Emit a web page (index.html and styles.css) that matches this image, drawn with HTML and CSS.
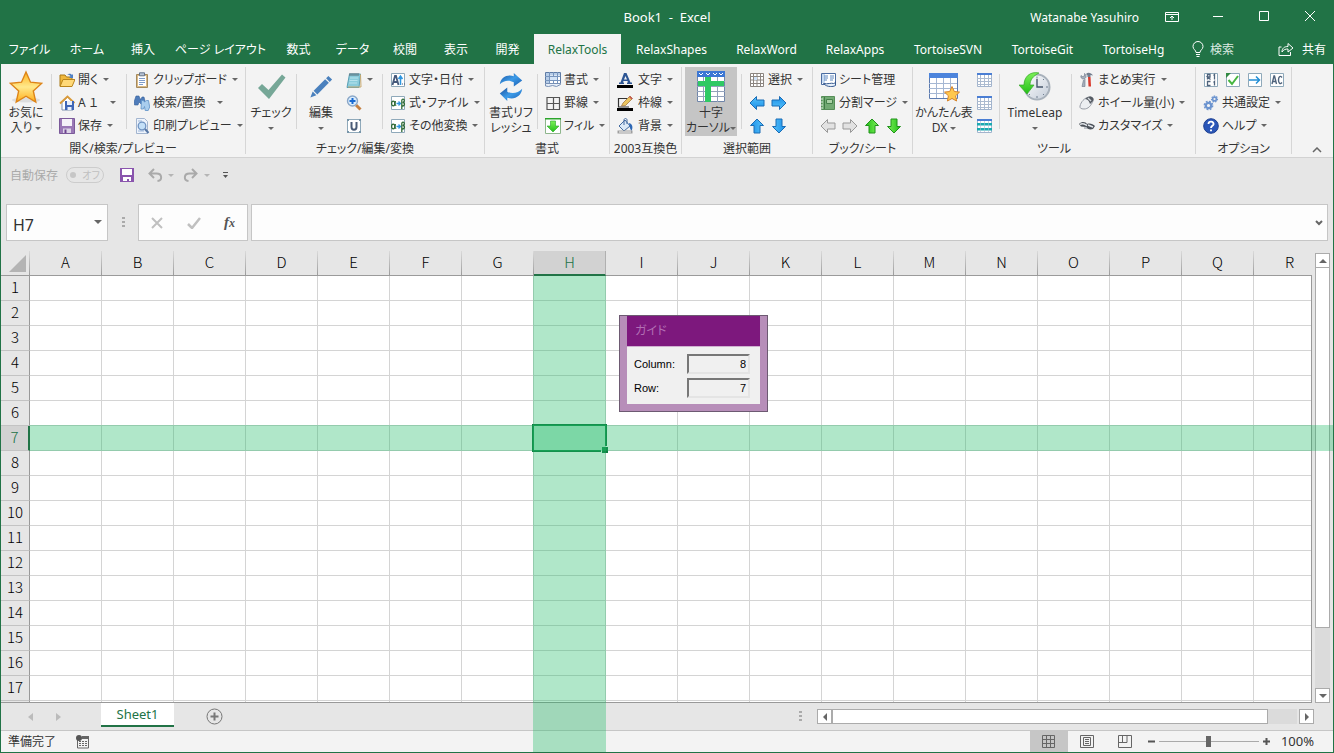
FILE: index.html
```html
<!DOCTYPE html>
<html lang="ja">
<head>
<meta charset="utf-8">
<title>Book1 - Excel</title>
<link rel="stylesheet" href="styles.css">
</head>
<body>
<svg class="sprite" aria-hidden="true">
  <defs>
    <linearGradient id="gold" x1="0" y1="0" x2="0" y2="1"><stop offset="0" stop-color="#ffb21c"/><stop offset=".5" stop-color="#ffe98c"/><stop offset="1" stop-color="#ffae1a"/></linearGradient>
    <linearGradient id="blue" x1="0" y1="0" x2="1" y2="1"><stop offset="0" stop-color="#1c4f9c"/><stop offset=".5" stop-color="#3c9be8"/><stop offset="1" stop-color="#1a5cb0"/></linearGradient>
    <linearGradient id="sky" x1="0" y1="0" x2="0" y2="1"><stop offset="0" stop-color="#55c2fa"/><stop offset="1" stop-color="#1c8fe8"/></linearGradient>
    <linearGradient id="lime" x1="0" y1="0" x2="0" y2="1"><stop offset="0" stop-color="#7df05a"/><stop offset="1" stop-color="#22bf16"/></linearGradient>
    <linearGradient id="silver" x1="0" y1="0" x2="1" y2="1"><stop offset="0" stop-color="#ffffff"/><stop offset="1" stop-color="#c3ccd8"/></linearGradient>
    <path id="arrow-shape" d="M1 8 7.500 1.500V5H15v6H7.500v3.500z"/>
  </defs>
  <symbol id="star" viewBox="0 0 34 34"><ellipse cx="17" cy="30" rx="14" ry="2.500" fill="#ddd"/><path d="M17 2l4.500 10.200 11 1.200-8.200 7.500L26.800 32 17 26.200 7.200 32l2.500-11.100L1.500 13.400l11-1.200z" fill="url(#gold)" stroke="#dd8418" stroke-width="1.400"/></symbol>
  <symbol id="folder" viewBox="0 0 16 16"><path d="M1 14V3h5l1.500 2H13v3" fill="#f0b83c" stroke="#a97816"/><path d="M1 14.500 4 7.500h12l-3 7z" fill="#ffd978" stroke="#b9851c"/><path d="M8 3c2-2 4-1.500 5 0l1-1v4h-4l1.500-1.500C11 3 9.500 2.500 8 3z" fill="#4d7fc4"/></symbol>
  <symbol id="home" viewBox="0 0 16 16"><path d="M3 7.500V15h11V7.500L8.500 2z" fill="#fff" stroke="#7d8fae"/><path d="M1 8.500 8.500 1.500 15.500 8" fill="none" stroke="#d99a3a" stroke-width="1.800"/><path d="M6 6h9v9H6z" fill="#3f66b6"/><path d="M8 6h5v4H8zM8.500 12h4v3h-4z" fill="#e8effa"/></symbol>
  <symbol id="floppy" viewBox="0 0 16 16"><path d="M.5.5h15v15H.5z" fill="#9a78b6" stroke="#7b5a9a"/><path d="M3 1h10v7H3z" fill="#f5f2f8"/><path d="M4 10.500h8V15H4z" fill="#dcd3e6"/><path d="M5.500 11.500h2V15h-2z" fill="#6d4291"/></symbol>
  <symbol id="clip" viewBox="0 0 16 16"><path d="M2.500 2.500h11v13h-11z" fill="#d9b987" stroke="#a58a5c"/><path d="M4 4h8v10H4z" fill="#fff"/><path d="M5 6.500h6M5 8.500h6M5 10.500h6M5 12.500h4" stroke="#7f9cc9"/><path d="M5.500.8h5v3h-5z" fill="#b8c4d4" stroke="#66758c"/></symbol>
  <symbol id="binoc" viewBox="0 0 16 16"><path d="M2 1h3l1 3h1l1-2h2l1 4-1 3H7L5 7 4 10H.5L0 7z" fill="#4f7cba" stroke="#35619c" stroke-width=".6"/><path d="M7.500 5.500h2l1 1.500 2-1.500h2l1.200 6.500-1.500 3.500h-3l-.7-4-1 2.500H7z" fill="#a9cdee" stroke="#5d91c6" stroke-width=".8"/></symbol>
  <symbol id="preview" viewBox="0 0 16 16"><path d="M2.500.5h8l3 3v12h-11z" fill="#eef4fc" stroke="#a3b5cf"/><path d="M4 3h4M4 13h6" stroke="#9db6d8"/><circle cx="8" cy="8" r="3.800" fill="#c4e0f8" stroke="#6f93c2" stroke-width="1.300"/><path d="M11 11l3.500 4" stroke="#5878a6" stroke-width="2"/></symbol>
  <symbol id="check-big" viewBox="0 0 30 28"><path d="M2 15 6 11l6.500 6L26 1.500l3.500 3L13 26z" fill="#76a797"/></symbol>
  <symbol id="pencil-big" viewBox="0 0 26 26"><path d="M5 17 17.500 4.500l4 4L9 21z" fill="#4a80bd"/><path d="M18.500 3.500 21 1l4 4-2.500 2.500zM4 18l4 4-6.500 2.500z" fill="#4a80bd"/></symbol>
  <symbol id="notebook" viewBox="0 0 16 16"><path d="M3.500 2h11L13 15.500H1z" fill="#8accdb" stroke="#5a9fb4"/><path d="M4 1v3M6 1v3M8 1v3M10 1v3M12 1v3" stroke="#5b6f78"/><path d="M4 6h8M3.500 8.500h8M3 11h8" stroke="#b7e2ec"/><path d="M14.500 2.500 15 15H2" fill="none" stroke="#c9a96e"/></symbol>
  <symbol id="magnify" viewBox="0 0 16 16"><path d="M10 10l4.500 4.500" stroke="#c58142" stroke-width="3"/><circle cx="6.500" cy="6" r="5" fill="#d9ecfd" stroke="#8ba7c7" stroke-width="1.400"/><path d="M6.500 3v6M3.500 6h6" stroke="#1769d2" stroke-width="2"/></symbol>
  <symbol id="ubox" viewBox="0 0 16 16"><path d="M1.500 1.500h13v13h-13z" fill="#fff" stroke="#8fa9ba"/><path d="M1 1h2v2H1zM13 1h2v2h-2zM1 13h2v2H1zM13 13h2v2h-2z" fill="#7795a9"/><path d="M5.500 4v5c0 3.500 5 3.500 5 0V4" fill="none" stroke="#4a5c77" stroke-width="2"/></symbol>
  <symbol id="abox" viewBox="0 0 16 16"><path d="M1.500 1.500h13v13h-13z" fill="#fff" stroke="#8fa9ba"/><path d="M2.500 13 5 4h1l2.500 9M3.500 10h4" fill="none" stroke="#46597b" stroke-width="1.800"/><path d="M10.500 13V5M8.500 7l2-3 2 3" fill="none" stroke="#2d95df" stroke-width="1.500"/><path d="M12 12h1M14 12h1" stroke="#46597b"/></symbol>
  <symbol id="abbox" viewBox="0 0 16 16"><path d="M1.500 1.500h13v13h-13z" fill="#fff" stroke="#8fa9ba"/><ellipse cx="3.200" cy="8.500" rx="1.600" ry="2.300" fill="none" stroke="#2f6a35" stroke-width="1.300"/><path d="m5.500 6-.5 3 1 2" fill="none" stroke="#2f6a35"/><path d="M6.500 8.500h3.500M8.500 6.500l2 2-2 2" stroke="#2d95df" stroke-width="1.300" fill="none"/><path d="M11.800 14V5.500c0-2 2.700-1.500 2.500.3 0 1-.8 1.500-1.500 1.700 2.300.2 2.200 3.600-.5 3.500" fill="none" stroke="#2f6a35" stroke-width="1.300"/></symbol>
  <symbol id="refresh" viewBox="0 0 30 32"><path d="M3 13C4 6 11 2 18 4.500V1l9 8-9 6.500V11c-5-3-11-2-15 2z" fill="url(#blue)"/><path d="M27 18c-1 8-8 12-16 9.500V31l-8-8 8-6.500V21c5 3 12 1.500 16-3z" fill="url(#blue)"/></symbol>
  <symbol id="fmt-grid" viewBox="0 0 16 16"><path d="M.5.5h15v11h-15z" fill="#fff" stroke="#5e7ba5"/><path d="M1 1h14v2.500H1zM1 1h3v11H1z" fill="#b7cde8"/><path d="M0 4.500h15M0 8.500h15M4.500 0v12M8.500 0v12M12.500 0v12" stroke="#7795be"/><path d="M5 5h7v3H5z" fill="#d4e4f7"/><path d="M.500 11.500V14l3 .5 4-1 4 1 4-2v-1z" fill="#e6eef8" stroke="#7890b5"/></symbol>
  <symbol id="borders" viewBox="0 0 16 16"><path d="M2 2.500h12.500v12H2zM8.500 2.500v12M2 8.500h12.500" fill="none" stroke="#555" stroke-width="1.200"/></symbol>
  <symbol id="fill" viewBox="0 0 16 16"><path d="M.5.500h15v15H.5z" fill="#fff" stroke="#8eb68c"/><path d="M0 0h16v1.500H0z" fill="#2ba52b"/><path d="M5.500 3h5v5H14l-6 6-6-6h3.500z" fill="url(#lime)" stroke="#29a428" stroke-width=".6"/></symbol>
  <symbol id="font-a" viewBox="0 0 16 16"><path d="M7 1h2.500l4 9.500H15V12h-5v-1.500h1L10.500 9h-4L6 10.500h1V12H2v-1.500h1.500zM7 7.500h3L8.500 4z" fill="#2d5694" fill-rule="evenodd"/><path d="M0 13h16v3H0z"/></symbol>
  <symbol id="frame-pen" viewBox="0 0 16 16"><path d="M10 3.500H1.500V12H12" fill="none" stroke="#333" stroke-width="1.200"/><path d="M4.500 11 6 8l7-7 2.500 2.500-7 7z" fill="#eac45f" stroke="#996b32" stroke-width=".7"/><path d="m12 2 2.500 2.500 1-1L13 1z" fill="#c75353"/><path d="M0 13h16v3H0z"/></symbol>
  <symbol id="bucket" viewBox="0 0 16 16"><path d="m2 8 6-6 5 6-6 5z" fill="#dce9f7" stroke="#446ba0"/><path d="M7 7V2c0-2 3-2 3 0v4" fill="none" stroke="#446ba0"/><path d="M12 5c4 1 4 5 2.500 8-2-3-2-5-2.500-8z" fill="#2e68b5"/><path d="M.5 12.500h15v3H.5z" fill="#9e9e9e"/><path d="M2 13.500h12v1H2z" fill="#f5f5f5"/></symbol>
  <symbol id="cross" viewBox="0 0 30 32"><path d="M1.500.5h27v30h-27z" fill="#fff" stroke="#7186a9"/><path d="M1 0h28v6H1z" fill="#3c77d4"/><path d="m3 2 2 2 2-2M10 2l2 2 2-2M17 2l2 2 2-2M23 2l2 2 2-2" stroke="#fff" fill="none"/><path d="M7.500 6v25M14.500 6v25M21.500 6v25M1 10.500h28M1 15.500h28M1 20.500h28M1 25.500h28" stroke="#93a2bb"/><path d="M9 6h6v25H9zM2 10h26v5H2z" fill="#2fc964"/></symbol>
  <symbol id="grid-gray" viewBox="0 0 16 16"><path d="M2 2h12v12H2z" fill="#fff"/><path d="M1.500 1.500h13v13h-13zM4.500 1v13M8 1v13M11.500 1v13M1 4.500h13M1 8h13M1 11.500h13" fill="none" stroke="#8b8580"/><path d="M5 5h3v3H5z" fill="#cfe2f8"/></symbol>
  <symbol id="al" viewBox="0 0 16 16"><use href="#arrow-shape" fill="url(#sky)" stroke="#1b6cb5"/></symbol>
  <symbol id="ar" viewBox="0 0 16 16"><use href="#arrow-shape" transform="rotate(180 8 8)" fill="url(#sky)" stroke="#1b6cb5"/></symbol>
  <symbol id="au" viewBox="0 0 16 16"><use href="#arrow-shape" transform="rotate(90 8 8)" fill="url(#sky)" stroke="#1b6cb5"/></symbol>
  <symbol id="ad" viewBox="0 0 16 16"><use href="#arrow-shape" transform="rotate(270 8 8)" fill="url(#sky)" stroke="#1b6cb5"/></symbol>
  <symbol id="gl" viewBox="0 0 16 16"><use href="#arrow-shape" fill="#e2e2e2" stroke="#999"/></symbol>
  <symbol id="gr" viewBox="0 0 16 16"><use href="#arrow-shape" transform="rotate(180 8 8)" fill="#e2e2e2" stroke="#999"/></symbol>
  <symbol id="gu" viewBox="0 0 16 16"><use href="#arrow-shape" transform="rotate(90 8 8)" fill="url(#lime)" stroke="#21931b"/></symbol>
  <symbol id="gd" viewBox="0 0 16 16"><use href="#arrow-shape" transform="rotate(270 8 8)" fill="url(#lime)" stroke="#21931b"/></symbol>
  <symbol id="sheet-doc" viewBox="0 0 16 16"><path d="M1.500 1.500h14v11h-14z" fill="#fff" stroke="#4b6ca0"/><path d="M2 2h3v9H2z" fill="#c6d9f0"/><path d="M4 4h4M4 6h4M4 8h3M10 4h4M10 6h4M10 8h3" stroke="#5e87be"/><path d="M3.500 11.500c4 1 8-1 10 0 2 0 2-2 2-2v4c-2 1-3 1-5 1-3 0-5-1-7-3z" fill="#e8f1fb" stroke="#35588f"/></symbol>
  <symbol id="green-book" viewBox="0 0 16 16"><path d="M1.500 1.500h13v13h-13z" fill="#72aa73" stroke="#568e58"/><path d="M4.500 2v12" stroke="#407b45"/><path d="M6.500 4.500h6v4h-6z" fill="#a9d1a5" stroke="#45804a"/><path d="M1 4h2M1 7h2M1 10h2M1 13h2" stroke="#dceedd"/></symbol>
  <symbol id="table-star" viewBox="0 0 32 32"><path d="M1.500 2.500h28v25h-28z" fill="#fff" stroke="#5c7bb0"/><path d="M1 2h29v5H1z" fill="#4c84dc"/><path d="M8.500 7v20M15.500 7v20M22.500 7v20M1 12.500h28M1 17.500h28M1 22.500h28" stroke="#a5b7d3"/><path d="m24 15.500 2.300 5 5.200.600-3.900 3.700 1 5.200-4.600-2.500-4.600 2.500 1-5.200-3.900-3.700 5.200-.6z" fill="#ffc84d" stroke="#d7842a"/></symbol>
  <symbol id="table-small" viewBox="0 0 16 16"><path d="M1.500 1.500h14v13h-14z" fill="#fff" stroke="#a2b4cd"/><path d="M1 1h15v2H1z" fill="#4a7ed4"/><path d="M4.500 3v11M8.500 3v11M12.500 3v11M1 6.500h14M1 9.500h14M1 12.500h14" stroke="#acbbd0"/></symbol>
  <symbol id="table-band" viewBox="0 0 16 16"><path d="M1.500 1.500h14v13h-14z" fill="#fff" stroke="#a2b4cd"/><path d="M1 1h15v2H1z" fill="#4a7ed4"/><path d="M1 5h15v2.500H1zM1 10h15v2.500H1z" fill="#19aab1"/><path d="M4.500 3v11M8.500 3v11M12.500 3v11" stroke="#acbbd0" stroke-opacity=".6"/></symbol>
  <symbol id="clock" viewBox="0 0 32 32"><circle cx="18" cy="16" r="12.500" fill="url(#silver)" stroke="#a8b1bb" stroke-width="2"/><path d="M18 8v8h6" stroke="#46556a" stroke-width="1.400" fill="none"/><path d="M18 5.500v2M18 25v2M27 16h2M24 9l1-1M24 23l1 1M11 23l-1 1" stroke="#717f91"/><path d="M20 2C11 0 5 6 5 14H0l8 9 7-9h-4c0-5 3-9 9-12z" fill="url(#lime)" stroke="#37a62a" stroke-width=".7"/></symbol>
  <symbol id="tools" viewBox="0 0 16 16"><path d="M4.500 8 3 14.500h3L6 7M2 3.500C1 6 4 8 6 6.500S7 2 5.500 1.500V4l-2 .5z" fill="#a7b0bd" stroke="#6c7787" stroke-width=".6"/><path d="M7 2c2-2 5-1.500 7 1.500L11.500 3v2H8.500V3.500z" fill="#717d8e"/><path d="M9 5h2.500l.5 9.500H9.500z" fill="#d8392c"/></symbol>
  <symbol id="mouse" viewBox="0 0 16 16"><path d="M1 11C2 7 5 3 10 2c3-.5 5 2 4 4-2 5-5 8-9 8-3 0-4.500-1-4-3z" fill="#eceef1" stroke="#989da6"/><path d="M8 2.500C12 0 16 3 14 6l-3 3C10 6 9 4.500 6 4z" fill="#555b63"/><path d="m9 3 3 3" stroke="#d3d7dc" stroke-width="1.400"/></symbol>
  <symbol id="custom" viewBox="0 0 16 16"><path d="M0 6c3-3 7-2 8 0 3-1 6 0 8 2l-2 3c-3 1-6 0-7-2L2 8.500z" fill="#4c525a"/><path d="M1 6.500c3-2 5 0 7 1M9 7l5 2" stroke="#e2e5e9" stroke-width="1.400" fill="none"/><path d="M5 10h3" stroke="#adb2b8" stroke-width="1.500"/></symbol>
  <symbol id="r1c1" viewBox="0 0 16 16"><path d="M1.500 1.500h13v13h-13z" fill="#fff" stroke="#8fa9ba"/><path d="M4.500 7.500V2.500H7V5H4.500L7.500 7.500M10.500 3.500l1-1v5M7.500 9.500h-3v4h3M10.500 10.500l1-1v4" fill="none" stroke="#4f637c" stroke-width="1.300"/></symbol>
  <symbol id="check-box" viewBox="0 0 16 16"><path d="M1.500 1.500h13v13h-13z" fill="#fff" stroke="#8fa9ba"/><path d="M1 1h5L1 6z" fill="#328a43"/><path d="m3.500 8 3.500 4 6-8" fill="none" stroke="#46b63f" stroke-width="2"/></symbol>
  <symbol id="right-box" viewBox="0 0 16 16"><path d="M1.500 1.500h13v13h-13z" fill="#fff" stroke="#8fa9ba"/><path d="M2 8h11M9 4.500 12.500 8 9 11.500" fill="none" stroke="#248fd5" stroke-width="1.500"/></symbol>
  <symbol id="ac-box" viewBox="0 0 16 16"><path d="M1.500 1.500h13v13h-13z" fill="#fff" stroke="#8fa9ba"/><path d="m3 12 2-8h.5l2 8M3.500 9.500h4M13 5.500C11 3 9.500 5 9.500 8s1.500 5 3.500 2.500" fill="none" stroke="#4f637c" stroke-width="1.400"/></symbol>
  <symbol id="gears" viewBox="0 0 16 16"><circle cx="5.500" cy="10.500" r="2.700" fill="none" stroke="#6c94cf" stroke-width="2.200"/><circle cx="5.500" cy="10.500" r="4.200" fill="none" stroke="#6c94cf" stroke-width="1.400" stroke-dasharray="1.800 1.500"/><circle cx="11.500" cy="4" r="1.900" fill="none" stroke="#6c94cf" stroke-width="1.600"/><circle cx="11.500" cy="4" r="3" fill="none" stroke="#6c94cf" stroke-width="1.200" stroke-dasharray="1.400 1.200"/></symbol>
  <symbol id="help" viewBox="0 0 16 16"><circle cx="8" cy="8" r="7.300" fill="#2a56b8" stroke="#1c3f91"/><path d="M5.500 6C5.500 2.500 11 3 10.500 6.200 10.200 7.800 8 7.800 8 10M8 11.500v1.800" fill="none" stroke="#fff" stroke-width="1.900"/></symbol>
</svg>

<div class="app">
  <header class="titlebar">
    <h1 class="doc-title">Book1&nbsp; -&nbsp; Excel</h1>
    <span class="user">Watanabe Yasuhiro</span>
    <button class="win-btn" aria-label="リボンの表示オプション"><svg width="14" height="12" viewBox="0 0 14 12"><path d="M.5 1.500h13v9H.5zM1 3.500h12M7 9V5M5 7l2-2 2 2" fill="none" stroke="#fff"/></svg></button>
    <button class="win-btn" aria-label="最小化"><svg width="12" height="12"><path d="M1 5.500h10" stroke="#fff"/></svg></button>
    <button class="win-btn" aria-label="最大化"><svg width="12" height="12"><path d="M1.500.500h9v9h-9z" fill="none" stroke="#fff"/></svg></button>
    <button class="win-btn" aria-label="閉じる"><svg width="12" height="12"><path d="m1 0 10 10M11 0 1 10" stroke="#fff"/></svg></button>
  </header>

  <nav class="tabs" aria-label="リボン タブ">
    <div class="tab-list">
      <button class="tab">ファイル</button><button class="tab">ホーム</button><button class="tab">挿入</button><button class="tab">ページ レイアウト</button><button class="tab">数式</button><button class="tab">データ</button><button class="tab">校閲</button><button class="tab">表示</button><button class="tab">開発</button><button class="tab active">RelaxTools</button><button class="tab">RelaxShapes</button><button class="tab">RelaxWord</button><button class="tab">RelaxApps</button><button class="tab">TortoiseSVN</button><button class="tab">TortoiseGit</button><button class="tab">TortoiseHg</button>
    </div>
    <button class="tab tell"><svg width="12" height="16" viewBox="0 0 12 16"><path d="M4 11.500C4 9 1 8.500 1 5.500a5 5 0 0 1 10 0c0 3-3 3.500-3 6zM4 13.500h4M4.500 15.500h3" fill="none" stroke="#fff"/></svg>検索</button>
    <button class="tab share"><svg width="16" height="14" viewBox="0 0 16 14"><path d="M3.500 5H1v8.500h11.500V10M4 10c0-4 2.500-5.500 6-5.500V1.500l5 4.500-5 4V7C7.500 7 5.500 7.500 4 10z" fill="none" stroke="#fff"/></svg>共有</button>
  </nav>

  <section class="ribbon" aria-label="RelaxTools">
    <div class="group g-open">
      <div class="group-body">
        <button class="big"><svg width="34" height="34"><use href="#star"/></svg><span>お気に<br>入り<i class="caret"></i></span></button>
        <div class="stack c-file">
          <button class="small"><svg class="ic"><use href="#folder"/></svg>開く<i class="caret"></i></button>
          <button class="small"><svg class="ic"><use href="#home"/></svg><span class="wide">A １</span><i class="caret"></i></button>
          <button class="small"><svg class="ic"><use href="#floppy"/></svg>保存<i class="caret"></i></button>
        </div>
        <div class="stack">
          <button class="small"><svg class="ic"><use href="#clip"/></svg>クリップボード<i class="caret"></i></button>
          <button class="small"><svg class="ic"><use href="#binoc"/></svg><span class="wide">検索/置換</span><i class="caret"></i></button>
          <button class="small"><svg class="ic"><use href="#preview"/></svg>印刷プレビュー<i class="caret"></i></button>
        </div>
      </div>
      <h2>開く/検索/プレビュー</h2>
    </div>
    <div class="group g-check">
      <div class="group-body">
        <button class="big"><svg width="30" height="34"><use href="#check-big"/></svg><span>チェック<br><i class="caret alone"></i></span></button>
        <div class="big-wrap"><button class="big"><svg width="24" height="34"><use href="#pencil-big"/></svg><span>編集<br><i class="caret alone"></i></span></button></div>
        <div class="stack flush">
          <button class="small" aria-label="メモ"><svg class="ic"><use href="#notebook"/></svg><i class="caret"></i></button>
          <button class="small" aria-label="拡大"><svg class="ic"><use href="#magnify"/></svg></button>
          <button class="small" aria-label="下線"><svg class="ic"><use href="#ubox"/></svg></button>
        </div>
        <div class="stack">
          <button class="small"><svg class="ic"><use href="#abox"/></svg>文字・日付<i class="caret"></i></button>
          <button class="small"><svg class="ic"><use href="#abbox"/></svg>式・ファイル<i class="caret"></i></button>
          <button class="small"><svg class="ic"><use href="#abbox"/></svg>その他変換<i class="caret"></i></button>
        </div>
      </div>
      <h2>チェック/編集/変換</h2>
    </div>
    <div class="group g-format">
      <div class="group-body">
        <button class="big"><svg width="28" height="34"><use href="#refresh"/></svg><span>書式リフ<br>レッシュ</span></button>
        <div class="stack">
          <button class="small"><svg class="ic"><use href="#fmt-grid"/></svg>書式<i class="caret"></i></button>
          <button class="small"><svg class="ic"><use href="#borders"/></svg>罫線<i class="caret"></i></button>
          <button class="small"><svg class="ic"><use href="#fill"/></svg>フィル<i class="caret"></i></button>
        </div>
      </div>
      <h2>書式</h2>
    </div>
    <div class="group g-color">
      <div class="group-body">
        <div class="stack flush">
          <button class="small roomy"><svg class="ic"><use href="#font-a"/></svg>文字<i class="caret"></i></button>
          <button class="small roomy"><svg class="ic"><use href="#frame-pen"/></svg>枠線<i class="caret"></i></button>
          <button class="small roomy"><svg class="ic"><use href="#bucket"/></svg>背景<i class="caret"></i></button>
        </div>
      </div>
      <h2>2003互換色</h2>
    </div>
    <div class="group g-select">
      <div class="group-body">
        <button class="big pressed"><svg width="30" height="34"><use href="#cross"/></svg><span>十字<br>カーソル<i class="caret"></i></span></button>
        <div class="stack">
          <button class="small"><svg class="ic"><use href="#grid-gray"/></svg>選択<i class="caret"></i></button>
          <div class="icons"><button aria-label="左"><svg class="ic"><use href="#al"/></svg></button><button aria-label="右"><svg class="ic"><use href="#ar"/></svg></button></div>
          <div class="icons"><button aria-label="上"><svg class="ic"><use href="#au"/></svg></button><button aria-label="下"><svg class="ic"><use href="#ad"/></svg></button></div>
        </div>
      </div>
      <h2>選択範囲</h2>
    </div>
    <div class="group g-book">
      <div class="group-body">
        <div class="stack flush">
          <button class="small"><svg class="ic"><use href="#sheet-doc"/></svg>シート管理</button>
          <button class="small"><svg class="ic"><use href="#green-book"/></svg>分割マージ<i class="caret"></i></button>
          <div class="icons"><button aria-label="前のシート"><svg class="ic"><use href="#gl"/></svg></button><button aria-label="次のシート"><svg class="ic"><use href="#gr"/></svg></button><button aria-label="上へ"><svg class="ic"><use href="#gu"/></svg></button><button aria-label="下へ"><svg class="ic"><use href="#gd"/></svg></button></div>
        </div>
      </div>
      <h2>ブック/シート</h2>
    </div>
    <div class="group g-tool">
      <div class="group-body">
        <button class="big"><svg width="32" height="34"><use href="#table-star"/></svg><span>かんたん表<br>DX<i class="caret"></i></span></button>
        <div class="stack flush narrow">
          <button class="small" aria-label="表1"><svg class="ic"><use href="#table-small"/></svg></button>
          <button class="small" aria-label="表2"><svg class="ic"><use href="#table-small"/></svg></button>
          <button class="small" aria-label="表3"><svg class="ic"><use href="#table-band"/></svg></button>
        </div>
        <div class="big-wrap"><button class="big leap"><svg width="32" height="34"><use href="#clock"/></svg><span>TimeLeap<br><i class="caret alone"></i></span></button></div>
        <div class="stack">
          <button class="small"><svg class="ic"><use href="#tools"/></svg>まとめ実行<i class="caret"></i></button>
          <button class="small"><svg class="ic"><use href="#mouse"/></svg>ホイール量(小)<i class="caret"></i></button>
          <button class="small"><svg class="ic"><use href="#custom"/></svg>カスタマイズ<i class="caret"></i></button>
        </div>
      </div>
      <h2>ツール</h2>
    </div>
    <div class="group g-option">
      <div class="group-body">
        <div class="stack flush">
          <div class="icons"><button aria-label="R1C1"><svg class="ic"><use href="#r1c1"/></svg></button><button aria-label="チェック"><svg class="ic"><use href="#check-box"/></svg></button><button aria-label="移動"><svg class="ic"><use href="#right-box"/></svg></button><button aria-label="AC"><svg class="ic"><use href="#ac-box"/></svg></button></div>
          <button class="small"><svg class="ic"><use href="#gears"/></svg>共通設定<i class="caret"></i></button>
          <button class="small"><svg class="ic"><use href="#help"/></svg>ヘルプ<i class="caret"></i></button>
        </div>
      </div>
      <h2>オプション</h2>
    </div>
    <button class="collapse" aria-label="リボンを折りたたむ"><svg width="10" height="6"><path d="m1 5 4-4 4 4" fill="none" stroke="#666" stroke-width="1.500"/></svg></button>
  </section>

  <div class="quick">
    <label class="autosave">自動保存<button class="toggle" role="switch" aria-checked="false"><i class="knob"></i>オフ</button></label>
    <button aria-label="上書き保存"><svg width="14" height="14"><path d="M0 0h14v14H0z" fill="#8a55ae"/><path d="M2 1h10v6H2zM3 9h8v4H9v-2H7v2H3z" fill="#fff"/></svg></button>
    <button class="undo" aria-label="元に戻す"><svg width="15" height="14"><path d="M6 1 1.500 5.500 6 10M2 5.500h6.500c6 0 6 7 1 7.500" fill="none" stroke="#aaa" stroke-width="2"/></svg><i class="caret faint"></i></button>
    <button class="redo" aria-label="やり直し"><svg width="15" height="14"><path d="m9 1 4.500 4.500L9 10M13 5.500H6.500c-6 0-6 7-1 7.500" fill="none" stroke="#aaa" stroke-width="2"/></svg><i class="caret faint"></i></button>
    <button class="more" aria-label="カスタマイズ"><svg width="7" height="8"><path d="M1 1.500h5" stroke="#555"/><path d="M1 4h5L3.500 7z" fill="#555"/></svg></button>
  </div>

  <div class="formula">
    <div class="name-box"><input aria-label="名前ボックス" value="H7"><i class="caret"></i></div>
    <i class="dots"></i>
    <div class="fx-box">
      <button aria-label="キャンセル"><svg width="12" height="12"><path d="m1 1 10 10M11 1 1 11" stroke="#c0c0c0" stroke-width="2"/></svg></button>
      <button aria-label="入力"><svg width="14" height="12"><path d="m1 7 4 4 8-10" fill="none" stroke="#c0c0c0" stroke-width="2.500"/></svg></button>
      <button class="fx" aria-label="関数の挿入">f<sub>x</sub></button>
    </div>
    <div class="formula-box"><input aria-label="数式バー"><svg width="8" height="6"><path d="m1 1 3 3 3-3" fill="none" stroke="#666" stroke-width="2"/></svg></div>
  </div>

  <main class="work">
    <div class="sheet">
      <table class="cells" id="cells"></table>
    </div>
    <div class="vscroll">
      <button class="sb" aria-label="上へスクロール"><svg width="8" height="4"><path d="M0 4h8L4 0z" fill="#666"/></svg></button>
      <div class="thumb"></div><div class="track"></div>
      <button class="sb" aria-label="下へスクロール"><svg width="8" height="4"><path d="M0 0h8L4 4z" fill="#666"/></svg></button>
    </div>
  </main>

  <div class="sheet-bar">
    <div class="sheet-nav"><button aria-label="前へ"><svg width="5" height="8"><path d="M5 0v8L0 4z" fill="#bbb"/></svg></button><button aria-label="次へ"><svg width="5" height="8"><path d="M0 0v8l5-4z" fill="#bbb"/></svg></button></div>
    <button class="sheet-tab">Sheet1</button>
    <button class="add-sheet" aria-label="新しいシート"><svg width="17" height="17"><circle cx="8.500" cy="8.500" r="7.500" fill="none" stroke="#777"/><path d="M4.500 8.500h8M8.500 4.500v8" stroke="#777" stroke-width="2"/></svg></button>
    <i class="dots"></i>
    <div class="hscroll">
      <button class="sb" aria-label="左へスクロール"><svg width="4" height="8"><path d="M4 0v8L0 4z" fill="#666"/></svg></button>
      <div class="thumb"></div><div class="track"></div>
      <button class="sb" aria-label="右へスクロール"><svg width="4" height="8"><path d="M0 0v8l4-4z" fill="#666"/></svg></button>
    </div>
  </div>

  <footer class="status">
    <span>準備完了</span>
    <button class="macro" aria-label="マクロの記録"><svg width="14" height="14"><path d="M1.500 5v8h11V2H7" fill="none" stroke="#666"/><path d="M6 1h7v3H6z" fill="#666"/><circle cx="3" cy="3" r="3" fill="#555"/><path d="M3 6.500h8M3 8.500h8M3 10.500h8" stroke="#666" stroke-dasharray="2 1"/></svg></button>
    <div class="views">
      <button class="on" aria-label="標準"><svg width="14" height="14"><path d="M.5.500h12v12H.5zM4.500 0v13M8.500 0v13M0 4.500h13M0 8.500h13" fill="none" stroke="#666"/></svg></button>
      <button aria-label="ページ レイアウト"><svg width="14" height="14"><path d="M.5.500h13v12H.5zM3.500 2.500h7v8h-7zM5 4.500h4M5 6.500h4M5 8.500h4" fill="none" stroke="#666"/></svg></button>
      <button aria-label="改ページ プレビュー"><svg width="14" height="14"><path d="M.5.500h13v12H.5zM0 7.500h9V0M4.500 0v7" fill="none" stroke="#666"/></svg></button>
    </div>
    <div class="zoom">
      <button aria-label="縮小"><svg width="7" height="7"><path d="M0 3.500h7" stroke="#555" stroke-width="2"/></svg></button>
      <input type="range" min="0" max="100" value="50" aria-label="ズーム">
      <button aria-label="拡大"><svg width="7" height="7"><path d="M0 3.500h7M3.500 0v7" stroke="#555" stroke-width="2"/></svg></button>
      <span>100%</span>
    </div>
  </footer>

  <div class="guide-col"></div>
  <div class="guide-row"></div>

  <form class="guide">
    <h2>ガイド</h2>
    <div class="guide-body">
      <label for="gcol">Column:</label><input id="gcol" value="8" readonly>
      <label for="grow">Row:</label><input id="grow" value="7" readonly>
    </div>
  </form>
</div>
<script src="sheet.js"></script>
</body>
</html>
```

FILE: styles.css
```css
* { box-sizing: border-box; }
body {
  margin: 0;
  font: 12px/15px "Noto Sans", "Noto Sans CJK JP", sans-serif;
  font-feature-settings: "palt";
  color: #333;
}
h1, h2 { margin: 0; font: inherit; }
button {
  border: 0; padding: 0; background: none; color: inherit; font: inherit;
  font-feature-settings: inherit; display: flex; align-items: center; justify-content: center;
  white-space: nowrap;
}
input { font: inherit; color: inherit; min-width: 0; border: 0; background: none; padding: 0; }
svg { display: block; flex: none; }
.sprite { position: absolute; width: 0; height: 0; }

.app {
  position: relative; display: flex; flex-direction: column; height: 100vh; overflow: hidden;
  border: 1px solid #217346; border-top: 0; background: #e6e6e6;
}

/* title bar */
.titlebar {
  display: flex; align-items: center; justify-content: flex-end; flex: none; height: 34px;
  background: #217346; color: #fff; position: relative;
}
.doc-title { position: absolute; left: 0; right: 0; text-align: center; font-size: 13px; }
.user { font-size: 12px; margin-right: 10px; }
.win-btn { width: 46px; height: 34px; }

/* ribbon tabs */
.tabs { display: flex; flex: none; height: 30px; background: #217346; color: #fff; }
.tab-list { display: grid; grid-template-columns: 57px 58px 54px 101px 55px 53px 52px 50px 53px 87px 101px 89px 88px 98px 91px 91px; }
.tab.active { background: #f3f3f3; color: #217346; }
.tell { gap: 6px; margin-left: 13px; color: #dceae2; }
.share { gap: 8px; margin-left: auto; margin-right: 7px; }

/* ribbon */
.ribbon {
  display: flex; flex: none; height: 94px; padding: 3px 0; background: #f3f3f3;
  border-bottom: 1px solid #d2d2d2;
}
.group { flex: none; display: flex; flex-direction: column; border-right: 1px solid #d6d6d6; }
.group h2 { text-align: center; line-height: 18px; margin-top: 4px; white-space: nowrap; }
.group-body { display: flex; height: 69px; }
.group-body > * { flex: none; }
.g-open { width: 245px; }
.g-check { width: 239px; }
.g-format { width: 125px; }
.g-color { width: 72px; }
.g-select { width: 131px; }
.g-book { width: 100px; }
.g-tool { width: 283px; }
.g-option { width: 96px; }
.big { flex-direction: column; justify-content: flex-start; width: 50px; padding-top: 3px; gap: 1px; }
.big .caret { margin-left: 3px; }
.big .alone { margin-left: 0; }
.big-wrap, .stack { position: relative; }
.big-wrap::before, .stack::before {
  content: ""; position: absolute; left: 0; top: 7px; height: 55px; border-left: 1px solid #d6d6d6;
}
.flush::before { display: none; }
.big-wrap .big { height: 69px; }
.stack { display: grid; grid-template-rows: repeat(3, 23px); padding: 1px 0 0 8px; }
.c-file { width: 75px; }
.small { justify-content: flex-start; gap: 3px; }
.small .caret { margin-left: 2px; }
.small.roomy { gap: 5px; }
.small.roomy .caret { margin-left: 0; }
.small .wide { margin-right: 7px; }
.g-check .flush { width: 36px; padding-left: 0; }
.g-color .flush, .g-book .flush, .g-option .flush { padding-left: 7px; }
.g-format .big { width: 52px; }
.g-tool .big { width: 62px; }
.g-tool .leap { width: 72px; }
.g-tool .narrow { width: 24px; padding-left: 1px; }
.ic { width: 16px; height: 16px; }
.icons { display: flex; gap: 6px; }
.pressed { background: #c5c5c5; width: 52px; margin: 0 4px 0 3px; }
.caret {
  display: inline-block; flex: none; width: 0; height: 0; vertical-align: middle;
  border: 3px solid transparent; border-top-color: #666; border-bottom: 0;
}
.pressed .caret { margin-left: 0; }
.collapse { margin: auto 10px 0 auto; width: 12px; height: 8px; }

/* quick access */
.quick { display: flex; align-items: center; flex: none; height: 34px; padding: 0 9px; color: #aaa; }
.autosave { display: flex; align-items: center; gap: 8px; margin-right: 16px; }
.toggle { width: 38px; height: 16px; border: 1px solid #ccc; border-radius: 8px; gap: 6px; font-size: 10px; color: #c0c0c0; }
.knob { width: 6px; height: 6px; border-radius: 50%; background: #c6c6c6; }
.undo { margin-left: 14px; gap: 5px; }
.redo { margin-left: 9px; gap: 6px; }
.more { margin-left: 12px; }
.faint { border-top-color: #b5b5b5; }

/* formula bar */
.formula { display: flex; flex: none; height: 37px; margin: 12px 5px 10px; }
.name-box, .fx-box, .formula-box { display: flex; align-items: center; background: #fdfdfd; border: 1px solid #c6c6c6; }
.name-box { width: 102px; padding: 4px 5px 0 6px; }
.name-box input { flex: 1; font-size: 16px; }
.name-box .caret { border-width: 4px 4px 0; margin-bottom: 6px; }
.dots { width: 3px; height: 11px; align-self: center; background: repeating-linear-gradient(#aaa 0 2px, transparent 2px 4px); }
.formula .dots { margin: 0 13px 0 14px; }
.fx-box { width: 110px; justify-content: space-between; padding: 0 12px; margin-right: 3px; }
.fx { font: italic bold 15px/15px "Liberation Serif", serif; color: #555; }
.fx sub { font-size: 12px; line-height: 1; }
.formula-box { flex: 1; padding: 0 4px; }
.formula-box input { flex: 1; }

/* worksheet */
.work { display: flex; flex: 1; min-height: 0; }
.sheet { flex: 1; min-width: 0; overflow: hidden; position: relative; border-bottom: 1px solid #999; }
.sheet::after { content: ""; position: absolute; right: 0; top: 24px; bottom: 0; border-right: 1px solid #999; }
.cells { table-layout: fixed; border-collapse: separate; border-spacing: 0; width: 1325px; font: 300 15px/20px "Noto Sans CJK JP", sans-serif; color: #000; }
.cells th { font-weight: inherit; padding: 0 0 2px; height: 25px; background: #e6e6e6; }
.cells thead th { border-bottom: 1px solid #999; border-right: 1px solid; border-image: linear-gradient(#dcdcdc, #999) 1; text-align: center; }
.cells thead th:first-child { width: 29px; }
.cells .corner svg { margin: 4px 0 0 8px; }
.cells tbody th { border-right: 1px solid #999; border-bottom: 1px solid #c3c3c3; }
.cells td { height: 25px; padding: 0; background: #fff; border-right: 1px solid #d4d4d4; border-bottom: 1px solid #d4d4d4; }
.cells thead th.sel { background: #d2d2d2; color: #217346; border-image: none; border-right-color: #b0b0b0; border-bottom: 2px solid #217346; }
.cells tbody th.sel { background: #d2d2d2; color: #217346; border-right: 2px solid #217346; }
.cells td.active { position: relative; }
.cells td.active::before { content: ""; position: absolute; inset: -2px; border: 2px solid #107c41; }
.cells td.active::after { content: ""; position: absolute; right: -3px; bottom: -3px; width: 6px; height: 6px; background: #107c41; border: solid #fff; border-width: 1px 0 0 1px; }

.sb { flex: none; width: 15px; height: 15px; background: #fff; border: 1px solid #ababab; }
.thumb { background: #fff; border: 1px solid #ababab; }
.track { flex: 1; background: #dbdbdb; }
.vscroll { display: flex; flex-direction: column; flex: none; width: 15px; margin: 2px 3px 0; }
.vscroll .thumb { flex: 6; margin-top: -1px; }

/* sheet tabs */
.sheet-bar { display: flex; align-items: center; flex: none; height: 27px; padding-right: 19px; }
.sheet-nav { display: flex; gap: 23px; width: 100px; padding-left: 27px; }
.sheet-tab { align-self: flex-start; width: 73px; height: 24px; background: #fff; border-bottom: 2px solid #217346; color: #217346; font-size: 13px; }
.add-sheet { margin-left: 32px; }
.sheet-bar .dots { margin-left: auto; margin-right: 15px; }
.hscroll { display: flex; width: 38%; max-width: 497px; }
.hscroll .thumb { flex: 15; }
.hscroll .sb:last-child { margin-left: 2px; }

/* status */
.status { display: flex; align-items: center; flex: none; height: 22px; padding-left: 7px; background: #f3f3f3; border-top: 1px solid #c6c6c6; }
.macro { margin-left: 20px; }
.views { display: flex; margin-left: auto; }
.views button { width: 38px; height: 21px; }
.views .on { background: #c6c6c6; }
.zoom { display: flex; align-items: center; margin-right: 19px; margin-left: 4px; }
.zoom input { appearance: none; width: 100px; height: 12px; margin: 0 4px; background: linear-gradient(#aaa, #aaa) center / 100% 1px no-repeat; }
.zoom input::-webkit-slider-thumb { appearance: none; width: 5px; height: 11px; background: #666; }
.zoom span { margin-left: 11px; font-size: 13px; }

/* crosshair overlay */
.guide-col, .guide-row { position: absolute; background: rgba(30, 187, 100, .35); pointer-events: none; }
.guide-col { left: 532px; width: 73px; top: 276px; bottom: 0; }
.guide-row { left: 29px; right: 0; top: 425px; height: 26px; }

/* guide window */
.guide { position: absolute; left: 618px; top: 315px; width: 149px; padding: 0 7px 7px; background: #b78eb9; border: 1px solid #6d5a72; }
.guide h2 { background: #7d187d; color: #b26fb4; height: 30px; line-height: 29px; padding-left: 8px; }
.guide-body { display: grid; grid-template-columns: 53px 63px; row-gap: 4px; align-items: center; background: #f0f0f0; padding: 7px 7px 6px; color: #000; font: 11px/15px "Liberation Sans", sans-serif; border-top: 1px solid #cfb0d0; }
.guide-body input { height: 20px; text-align: right; padding: 0 2px; border: 2px solid; border-color: #777 #e4e4e4 #e4e4e4 #777; }
```

FILE: sheet.js
```javascript
const table = document.getElementById("cells");
const columns = "ABCDEFGHIJKLMNOPQR".split("");
const fullRows = 17;
const selected = { column: "H", row: 7 };

const headRow = table.createTHead().insertRow();
const corner = document.createElement("th");
corner.className = "corner";
corner.innerHTML = '<svg width="18" height="18"><path d="M17 0v17H0z" fill="#b4b4b4"/></svg>';
headRow.append(corner);
for (const name of columns) {
  const th = document.createElement("th");
  th.scope = "col";
  th.textContent = name;
  if (name === selected.column) th.className = "sel";
  headRow.append(th);
}

// One unlabelled row follows, since only its top edge shows.
const body = table.createTBody();
for (let r = 1; r <= fullRows + 1; r++) {
  const row = body.insertRow();
  const th = document.createElement("th");
  th.scope = "row";
  if (r <= fullRows) th.textContent = r;
  if (r === selected.row) th.className = "sel";
  row.append(th);
  for (const name of columns) {
    const cell = row.insertCell();
    if (name === selected.column && r === selected.row) cell.className = "active";
  }
}
```
